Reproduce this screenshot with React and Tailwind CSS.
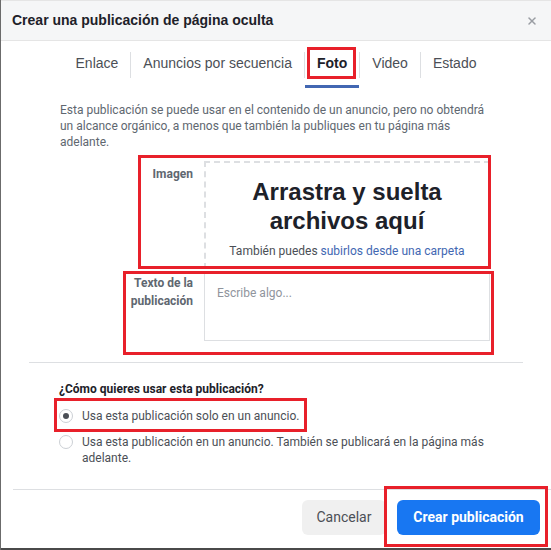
import { X } from 'lucide-react';

const tabs = ['Enlace', 'Anuncios por secuencia', 'Foto', 'Video', 'Estado'];

function Radio({ checked, children }) {
    return (
        <label className="flex items-start gap-[9px]">
            <span className="mt-[1px] w-[14px] h-[14px] shrink-0 rounded-full border border-[#ccd0d5] bg-white flex items-center justify-center">
                {checked && <span className="w-[6px] h-[6px] rounded-full bg-[#4b4f56]" />}
            </span>
            <span className="leading-[16px]">{children}</span>
        </label>
    );
}

export default function App() {
    return (
        <div className="relative w-[551px] h-[550px] overflow-hidden bg-white border-l border-[#6b6b6b] text-[#1d2129]" style={{ fontFamily: 'Roboto, sans-serif' }}>
            {/* header */}
            <div className="h-[41px] bg-[#f5f6f7] border-t border-[#cfd1d4] border-b border-[#e5e5e5] flex items-center justify-between pl-[11px] pr-[13px]">
                <h2 className="text-[14px] font-bold text-[#1d2129]" style={{ fontFamily: '"Liberation Sans", Arial, sans-serif' }}>
                    Crear una publicación de página oculta
                </h2>
                <X className="w-[12px] h-[12px] text-[#9a9da3]" strokeWidth={3} />
            </div>

            {/* tabs */}
            <div className="flex justify-center pt-[11px]" style={{ fontFamily: '"Liberation Sans", Arial, sans-serif' }}>
                {tabs.map((t, i) => (
                    <div key={t} className={`relative flex items-center h-[26px] pb-[3px] px-[12px] text-[14px] ${i > 0 ? 'border-l border-[#dddfe2]' : ''} ${t === 'Foto' ? 'font-bold text-[#1d2129]' : 'text-[#4b4f56]'}`}>
                        {t}
                        {t === 'Foto' && <span className="absolute left-0 right-0 -bottom-[10px] h-[3px] bg-[#4267b2]" />}
                    </div>
                ))}
            </div>

            {/* description */}
            <p className="mt-[24px] pl-[59px] pr-[60px] text-[12px] leading-[16px] text-[#606770]">
                Esta publicación se puede usar en el contenido de un anuncio, pero no obtendrá un alcance orgánico, a menos que también la publiques en tu página más adelante.
            </p>

            {/* form rows */}
            <div className="mt-[11px] ml-[122px] mr-[61px] flex flex-col gap-[4px]">
                <div className="flex gap-[11px]">
                    <div className="w-[70px] pt-[4px] text-right text-[12px] font-bold leading-[18px] text-[#606770]">Imagen</div>
                    <div className="flex-1 h-[108px] border-2 border-dashed border-[#dddfe2] flex flex-col items-center pt-[14px]">
                        <div className="text-[24px] font-bold leading-[29px] text-center text-[#1d2129]" style={{ fontFamily: '"Liberation Sans", Arial, sans-serif' }}>
                            Arrastra y suelta<br />archivos aquí
                        </div>
                        <div className="mt-[7px] text-[12px] text-[#4b4f56]">
                            También puedes <span className="text-[#4267b2]">subirlos desde una carpeta</span>
                        </div>
                    </div>
                </div>
                <div className="flex gap-[11px]">
                    <div className="w-[70px] pt-[1px] text-right text-[12px] font-bold leading-[18px] text-[#606770]">Texto de la publicación</div>
                    <div className="flex-1 h-[68px] border border-[#dddfe2] pl-[12px] pt-[10px] text-[12px] text-[#90949c]">Escribe algo...</div>
                </div>
            </div>

            <div className="mt-[21px] ml-[28px] mr-[28px] border-t border-[#dddfe2]" />

            {/* usage */}
            <div className="pl-[58px] pr-[60px] pt-[18px] text-[12px] leading-[16px]">
                <div className="font-bold text-[#1d2129]">¿Cómo quieres usar esta publicación?</div>
                <div className="mt-[11px] flex flex-col gap-[10px] text-[#4b4f56]">
                    <Radio checked>Usa esta publicación solo en un anuncio.</Radio>
                    <Radio>Usa esta publicación en un anuncio. También se publicará en la página más adelante.</Radio>
                </div>
            </div>

            <div className="mt-[23px] ml-[12px] border-t border-[#dddfe2]" />

            {/* footer */}
            <div className="flex justify-end gap-[11px] pt-[10px] pr-[11px]">
                <button className="h-[35px] w-[84px] rounded-[6px] bg-[#f0f0f0] text-[14px] text-[#4b4f56]">Cancelar</button>
                <button className="h-[35px] w-[143px] rounded-[6px] bg-[#1877f2] text-[14px] font-bold text-white">Crear publicación</button>
            </div>

            <div className="absolute left-0 right-0 bottom-0 h-[2px] bg-[#4a4a4a]" />

            {/* highlight frames */}
            <div className="absolute left-[306px] top-[47px] w-[49px] h-[32px] border-[3px] border-[#e8202a]" />
            <div className="absolute left-[137px] top-[155px] w-[353px] h-[114px] border-[3px] border-[#e8202a]" />
            <div className="absolute left-[122px] top-[271px] w-[371px] h-[84px] border-[3px] border-[#e8202a]" />
            <div className="absolute left-[53px] top-[398px] w-[253px] h-[34px] border-[3px] border-[#e8202a]" />
            <div className="absolute left-[383px] top-[486px] w-[164px] h-[61px] border-[3px] border-[#e8202a]" />
        </div>
    );
}
